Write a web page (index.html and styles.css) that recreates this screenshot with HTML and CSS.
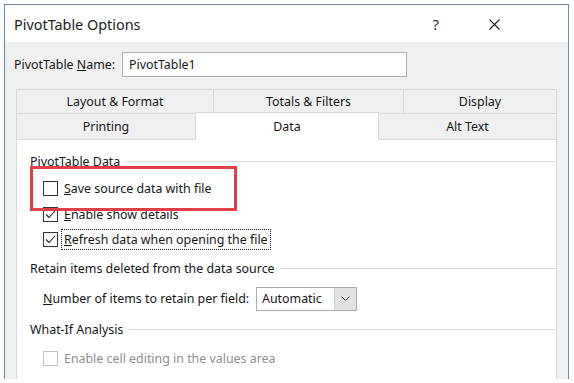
FILE: index.html
```html
<!DOCTYPE html>
<html>
<head>
<meta charset="utf-8">
<link rel="stylesheet" href="styles.css">
</head>
<body>
<div class="window">
  <div class="titlebar">
    <span class="title">PivotTable Options</span>
    <span class="help">?</span>
    <svg class="close" width="11" height="11" viewBox="0 0 11 11"><path d="M0.5 0.5L10.5 10.5M10.5 0.5L0.5 10.5" stroke="#222" stroke-width="1.1" fill="none"/></svg>
  </div>
  <div class="body">
    <div class="namerow">
      <span class="namelabel">PivotTable <u>N</u>ame:</span>
      <div class="input">PivotTable1</div>
    </div>
    <div class="tabs">
      <div class="tabrow back">
        <div class="tab t1">Layout &amp; Format</div>
        <div class="tab t2">Totals &amp; Filters</div>
        <div class="tab t3">Display</div>
      </div>
      <div class="tabrow front">
        <div class="tab p1">Printing</div>
        <div class="tab p2 active">Data</div>
        <div class="tab p3">Alt Text</div>
      </div>
    </div>
    <div class="panel">
      <div class="group g1"><span>PivotTable Data</span><i class="rule"></i></div>
      <div class="check c1"><span class="box"></span><span class="lbl"><u>S</u>ave source data with file</span></div>
      <div class="check c2"><span class="box"><svg width="13" height="13" viewBox="0 0 13 13"><path d="M2 6.5L5 9.5L11 3" stroke="#222" stroke-width="1.1" fill="none"/></svg></span><span class="lbl"><u>E</u>nable show details</span></div>
      <div class="check c3"><span class="box"><svg width="13" height="13" viewBox="0 0 13 13"><path d="M2 6.5L5 9.5L11 3" stroke="#222" stroke-width="1.1" fill="none"/></svg></span><span class="lbl focus"><u>R</u>efresh data when opening the file</span></div>
      <div class="group g2"><span>Retain items deleted from the data source</span><i class="rule"></i></div>
      <div class="numrow">
        <span class="lbl"><u>N</u>umber of items to retain per field:</span>
        <div class="select"><span class="val">Automatic</span><span class="btn"><svg width="9" height="6" viewBox="0 0 9 6"><path d="M0.5 0.5L4.5 4.5L8.5 0.5" stroke="#444" stroke-width="1" fill="none"/></svg></span></div>
      </div>
      <div class="group g3"><span>What-If Analysis</span><i class="rule"></i></div>
      <div class="check c4 disabled"><span class="box"></span><span class="lbl">Enable cell editing in the values area</span></div>
      <div class="redbox"></div>
    </div>
  </div>
</div>
</body>
</html>
```
FILE: styles.css
```css
html, body {
  margin: 0;
  padding: 0;
  background: #ffffff;
}
body {
  font-family: "Noto Sans", "Open Sans", sans-serif;
  font-size: 12.4px;
  color: #161616;
  overflow: hidden;
  height: 383px;
}
.window {
  margin: 4px 0 0 4px;
  width: 563px;
  height: 374px;
  border: 1px solid #6a86a4;
  border-bottom: none;
  overflow: hidden;
  display: flex;
  flex-direction: column;
}
.titlebar {
  height: 37px;
  flex: none;
  background: #fff;
  display: flex;
  align-items: center;
  padding-left: 9px;
  padding-top: 1px;
  box-sizing: border-box;
}
.title {
  font-size: 14.4px;
  color: #1a1a1a;
  flex: 1;
}
.help {
  font-size: 15px;
  color: #333;
  margin-right: 50px;
}
.close {
  margin-right: 68px;
}
.body {
  flex: 1;
  background: #f0f0f0;
  padding: 0 11px 0 11px;
  display: flex;
  flex-direction: column;
}
.namerow {
  display: flex;
  align-items: center;
  height: 25px;
  margin-top: 10px;
  margin-left: -2px;
}
.namelabel {
  width: 108px;
  flex: none;
}
.input {
  width: 277px;
  height: 23px;
  border: 1px solid #acacac;
  background: #fff;
  box-sizing: content-box;
  line-height: 23px;
  padding-left: 6px;
  margin-left: 0;
}
.tabs {
  margin-top: 12px;
  display: flex;
  flex-direction: column;
}
.tabrow {
  display: flex;
}
.tab {
  display: flex;
  align-items: center;
  justify-content: center;
  border: 1px solid #d9d9d9;
  border-bottom: none;
  background: #f0f0f0;
  box-sizing: border-box;
  margin-right: -1px;
}
.back .tab { height: 24px; }
.t1 { width: 198px; }
.t2 { width: 191px; }
.t3 { width: 154px; }
.front {
  height: 26px;
  align-items: flex-end;
}
.front .tab { height: 26px; }
.p1 { width: 180px; }
.p2 { width: 184px; }
.p3 { width: 179px; }
.front .tab.active {
  height: 28px;
  margin-top: -2px;
  background: #fff;
  position: relative;
  z-index: 1;
  margin-bottom: -1px;
  padding-bottom: 1px;
}
.panel {
  flex: 1;
  background: #fff;
  border: 1px solid #d9d9d9;
  border-bottom: none;
  position: relative;
  width: 541px;
  box-sizing: border-box;
  padding-left: 13px;
  display: flex;
  flex-direction: column;
}
.group {
  display: flex;
  align-items: center;
  height: 20px;
  color: #161616;
}
.group .rule {
  flex: 1;
  height: 1px;
  background: #dcdcdc;
  margin-left: 6px;
}
.g1 { margin-top: 11px; }
.g2 { margin-top: 6px; }
.g3 { margin-top: 9px; }
.check {
  display: flex;
  align-items: center;
  height: 25.5px;
  padding-left: 13px;
}
.c1 { margin-top: 5px; }
.box {
  width: 13px;
  height: 13px;
  border: 1px solid #333;
  background: #fff;
  flex: none;
  display: flex;
  margin-right: 6px;
}
.lbl.focus {
  outline: 1px dotted #222;
  outline-offset: 1px;
  padding: 0 1px;
  margin-left: -1px;
}
.numrow {
  display: flex;
  align-items: center;
  height: 24px;
  margin-top: 8px;
  padding-left: 13px;
}
.numrow .lbl {
  width: 213px;
  flex: none;
}
.select {
  width: 99px;
  height: 22px;
  border: 1px solid #adadad;
  display: flex;
  background: #fff;
}
.select .val {
  flex: 1;
  padding-left: 5px;
  line-height: 22px;
}
.select .btn {
  width: 21px;
  background: #e1e1e1;
  border-left: 1px solid #cfcfcf;
  display: flex;
  align-items: center;
  justify-content: center;
}
.c4 { margin-top: 6px; }
.disabled .box { border-color: #c4c4c4; }
.disabled .lbl { color: #8f8f8f; }
.redbox {
  position: absolute;
  left: 13px;
  top: 26px;
  width: 201px;
  height: 39px;
  border: 3px solid #e23f46;
}
```
